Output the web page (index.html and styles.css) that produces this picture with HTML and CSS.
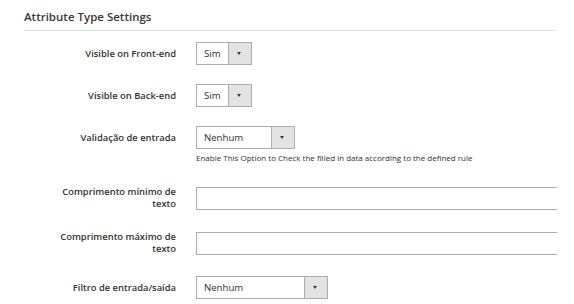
FILE: index.html
```html
<!DOCTYPE html>
<html lang="pt">
<head>
    <meta charset="UTF-8">
    <meta name="viewport" content="width=device-width, initial-scale=1.0">
    <title>Attribute Type Settings</title>
    <link rel="stylesheet" href="styles.css">
</head>
<body>

    <!-- Bloco de configuracoes do atributo -->
    <div class="fieldset">
        <div class="legend">Attribute Type Settings</div>

        <div class="field">
            <label class="label">Visible on Front-end</label>
            <div class="select small">
                <span class="value">Sim</span>
                <span class="arrow"></span>
            </div>
        </div>

        <div class="field">
            <label class="label">Visible on Back-end</label>
            <div class="select small">
                <span class="value">Sim</span>
                <span class="arrow"></span>
            </div>
        </div>

        <div class="field with-note">
            <label class="label">Validação de entrada</label>
            <div class="select medium">
                <span class="value">Nenhum</span>
                <span class="arrow"></span>
            </div>
        </div>
        <div class="note">Enable This Option to Check the filled in data according to the defined rule</div>

        <div class="field text-field">
            <label class="label">Comprimento mínimo de texto</label>
            <input type="text" class="input-text">
        </div>

        <div class="field text-field">
            <label class="label">Comprimento máximo de texto</label>
            <input type="text" class="input-text">
        </div>

        <div class="field">
            <label class="label">Filtro de entrada/saída</label>
            <div class="select large">
                <span class="value">Nenhum</span>
                <span class="arrow"></span>
            </div>
        </div>
    </div>

</body>
</html>
```

FILE: styles.css
```css
body {
    margin: 0;
    background: #fff;
    font-family: "Open Sans", "Liberation Sans", Arial, sans-serif;
    color: #303030;
}

.fieldset {
    width: 533px;
    margin-left: 24px;
    overflow: hidden;
}

.legend {
    font-size: 11.5px;
    font-weight: 600;
    color: #41362f;
    line-height: 18px;
    padding-top: 8px;
    padding-bottom: 4px;
    border-bottom: 1px solid #e3e3e3;
    margin-bottom: 11px;
}

.field {
    display: grid;
    grid-template-columns: 152px auto;
    column-gap: 20px;
    align-items: center;
    margin-bottom: 19px;
}

.field.with-note {
    margin-bottom: 3px;
}

.field.text-field {
    margin-bottom: 21px;
}

.label {
    text-align: right;
    font-size: 9.4px;
    font-weight: 600;
    line-height: 12px;
    color: #333;
    padding-left: 32px;
}

/* Caixa de selecao falsa */
.select {
    display: flex;
    height: 23px;
    box-sizing: border-box;
    border: 1px solid #adadad;
    background: #fff;
    font-size: 9.6px;
}

.select .value {
    flex: 1;
    padding-left: 7px;
    line-height: 21px;
}

.select .arrow {
    width: 22px;
    background: #e3e3e3;
    border-left: 1px solid #adadad;
    position: relative;
}

    .select .arrow::after {
        content: "";
        position: absolute;
        left: 8px;
        top: 9px;
        border-left: 2.5px solid transparent;
        border-right: 2.5px solid transparent;
        border-top: 3px solid #41362f;
    }

.select.small {
    width: 56px;
}

.select.medium {
    width: 99px;
}

.select.large {
    width: 132px;
}

.note {
    margin-left: 172px;
    font-size: 8px;
    line-height: 12px;
    margin-bottom: 22px;
}

.input-text {
    width: 420px;
    height: 23px;
    box-sizing: border-box;
    border: 1px solid #adadad;
    padding: 0 7px;
    margin: 0;
}
```
